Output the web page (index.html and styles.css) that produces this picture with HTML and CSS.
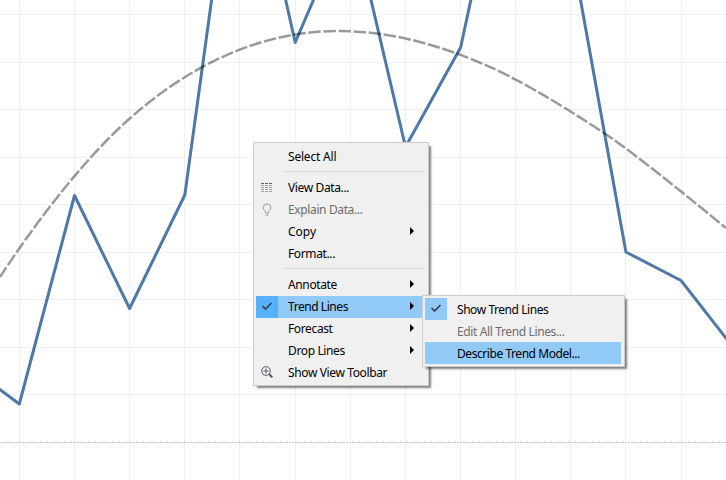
FILE: index.html
```html
<!DOCTYPE html>
<html lang="en">
<head>
<meta charset="utf-8">
<title>Trend lines</title>
<link rel="stylesheet" href="styles.css">
</head>
<body>
<main class="view">
  <svg class="chart" width="726" height="480" viewBox="0 0 726 480">
    <path class="grid" d="M19.5 0V480M74.5 0V480M129.5 0V480M184.5 0V480M239.5 0V480M295.5 0V480M350.5 0V480M405.5 0V480M460.5 0V480M515.5 0V480M570.5 0V480M625.5 0V480M681.5 0V480M0 14.5H726M0 62.5H726M0 109.5H726M0 157.5H726M0 204.5H726M0 252.5H726M0 299.5H726M0 347.5H726M0 394.5H726"/>
    <path class="zero" d="M1 442.5H726"/>
    <path class="series" d="M-36 363L19.3 404L74.5 195.5L129.6 308.5L184.8 195L212 -3M285 -3L295.2 42.500L316 -6M370.3 -3L405.5 147L460.6 47.500L471.5 -3M580 -3L625.9 252L681 280.500L736 351"/>
    <path class="trend" d="M0 277Q43.800 210.400 88 160.500Q142.100 99.400 203 66.700Q268.700 31 339 31Q406.600 31 484 64.300Q529.600 83.900 604 133Q635.600 153.800 726 228"/>
  </svg>

  <nav class="menu main-menu">
    <div class="item"><span class="icon"></span><span class="label wide">Select All</span></div>
    <hr class="rule">
    <div class="item"><span class="icon"><svg width="12" height="10" viewBox="0 0 12 10"><path class="rows-head" d="M0 0.500H12"/><path class="rows" d="M0 2.500H12M0 4.500H12M0 6.500H12M0 8.500H12"/></svg></span><span class="label">View Data...</span></div>
    <div class="item disabled"><span class="icon"><svg width="10" height="14" viewBox="0 0 10 14"><path class="bulb" d="M3.500 10V8.300C2.500 7.500 1.200 6.500 1.200 4.700A3.800 3.800 0 0 1 8.800 4.700C8.800 6.500 7.500 7.500 6.500 8.300V10ZM3.500 12H6.500"/></svg></span><span class="label">Explain Data...</span></div>
    <div class="item"><span class="icon"></span><span class="label full">Copy</span><i class="arrow"></i></div>
    <div class="item"><span class="icon"></span><span class="label">Format...</span></div>
    <hr class="rule">
    <div class="item"><span class="icon"></span><span class="label">Annotate</span><i class="arrow"></i></div>
    <div class="item active"><span class="icon checked"><svg width="12" height="10" viewBox="0 0 12 10"><path class="check" d="M1.500 4L4.500 7L10.500 1"/></svg></span><span class="label tight">Trend Lines</span><i class="arrow"></i></div>
    <div class="item"><span class="icon"></span><span class="label">Forecast</span><i class="arrow"></i></div>
    <div class="item"><span class="icon"></span><span class="label">Drop Lines</span><i class="arrow"></i></div>
    <div class="item"><span class="icon lifted"><svg width="12" height="12" viewBox="0 0 12 12"><circle class="lens" cx="5" cy="5" r="4.300"/><path class="lens" d="M2.500 5H7.500M5 2.500V7.500"/><path class="handle" d="M8.200 8.200L11.300 11.300"/></svg></span><span class="label">Show View Toolbar</span></div>
  </nav>

  <nav class="menu sub-menu">
    <div class="item"><span class="icon checked"><svg width="12" height="10" viewBox="0 0 12 10"><path class="check" d="M1.500 4L4.500 7L10.500 1"/></svg></span><span class="label tight">Show Trend Lines</span></div>
    <div class="item disabled"><span class="icon"></span><span class="label">Edit All Trend Lines...</span></div>
    <div class="item active"><span class="icon"></span><span class="label tight">Describe Trend Model...</span></div>
  </nav>
</main>
</body>
</html>
```
FILE: styles.css
```css
body { margin: 0; background: #fff; }
.view { position: relative; width: 726px; height: 480px; overflow: hidden; font: 12px/22px "Noto Sans", "Open Sans", sans-serif; color: #000; }
.chart { display: block; }
.chart path { fill: none; }
.grid { stroke: #f0f0f0; }
.zero { stroke: #c4c4c4; stroke-dasharray: 2 1; }
.series { stroke: #4e79a7; stroke-width: 3; stroke-linejoin: round; }
.trend { stroke: #000; stroke-opacity: .4; stroke-width: 2.5; stroke-dasharray: 12.4 2.7; stroke-dashoffset: 1; }

.menu { position: absolute; box-sizing: border-box; background: #f0f0f0; border: 1px solid #ccc; box-shadow: 3px 3px 2px -1px rgba(0, 0, 0, .5); }
.main-menu { left: 253px; top: 142px; width: 176px; height: 244px; padding: 3px 2px; }
.sub-menu { left: 422px; top: 295px; width: 203px; height: 72px; padding: 2px 3px 2px 2px; }
.item { display: flex; align-items: center; height: 22px; }
.icon { display: flex; align-items: center; justify-content: center; width: 22px; height: 22px; margin-right: 10px; }
.lifted { padding-bottom: 2px; box-sizing: border-box; }
.label { flex: 1; white-space: nowrap; letter-spacing: -.37px; }
.tight { letter-spacing: -.44px; }
.wide { letter-spacing: -.2px; }
.full { letter-spacing: 0; }
.sub-menu .label { padding-top: 2px; }
.disabled { color: #6d6d6d; }
.active { background: #91c9f7; }
.checked { background: #91c9f7; }
.active .checked { background: #56b0fa; }
.arrow { width: 0; height: 0; margin: 0 12px 2px 0; border: 4px solid transparent; border-left: 4px solid #000; border-right: 0; }
.rule { height: 1px; margin: 3px 1px 5px 28px; border: 0; background: #d7d7d7; }
.icon path, .icon circle { fill: none; }
.icon .check { stroke: #333f50; stroke-width: 1.6; }
.rows-head { stroke: #555b6b; stroke-dasharray: 3 1; stroke-dashoffset: 0; }
.rows { stroke: #a0a0a0; stroke-dasharray: 3 1; }
.bulb { stroke: #999; }
.lens { stroke: #555b6b; }
.handle { stroke: #555b6b; stroke-width: 2; }
```
